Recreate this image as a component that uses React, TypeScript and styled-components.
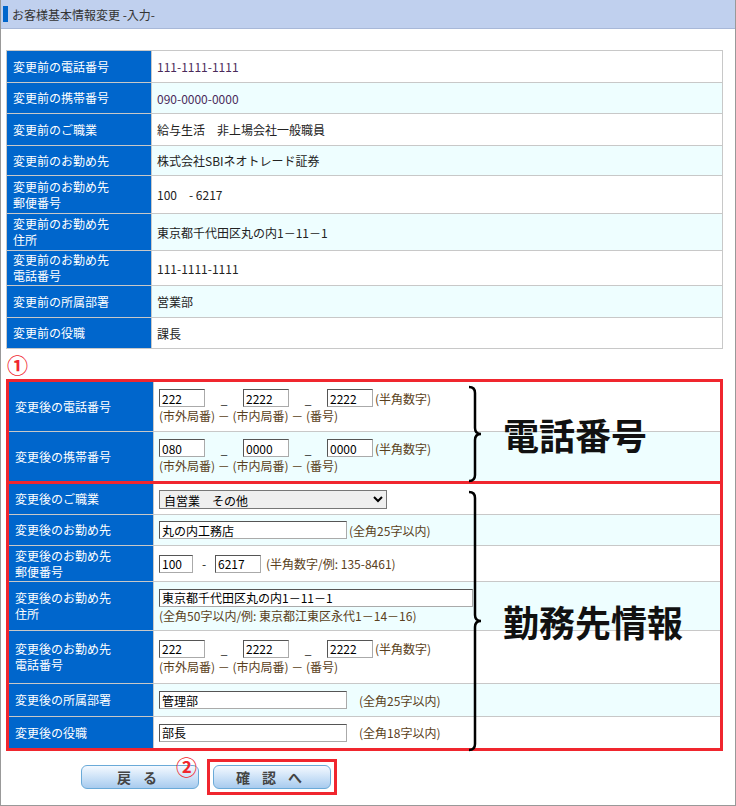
import styled, { createGlobalStyle } from 'styled-components';

const Global = createGlobalStyle`
	body {
		margin: 0;
		font-family: "Noto Sans CJK JP", "Noto Sans", sans-serif;
		font-size: 12px;
		color: #222;
	}
`;

const Frame = styled.div`
	width: 736px;
	height: 806px;
	box-sizing: border-box;
	border: 1px solid #999;
	border-top: none;
	position: relative;
	background: #fff;
`;

const Header = styled.div`
	height: 28px;
	background: #c0d0ee;
	border-bottom: 1px solid #a8b8d8;
	display: flex;
	align-items: center;
	gap: 4px;
	font-size: 12px;
	color: #333;
	&::before {
		content: '';
		width: 5px;
		height: 16px;
		background: #0066cc;
		margin-left: 2px;
	}
`;

const Body = styled.div`
	padding: 21px 12px 0 5px;
`;

const Table = styled.div<{ $boxed?: boolean }>`
	display: grid;
	grid-template-columns: 144px 1fr;
	gap: 1px;
	background: #c8c8c8;
	border: solid #c8c8c8;
	border-width: ${p => (p.$boxed ? '0' : '1px')};
`;

const Label = styled.div<{ $h: number }>`
	background: #0066cc;
	color: #fff;
	min-height: ${p => p.$h}px;
	display: flex;
	align-items: center;
	padding: 0 6px;
	line-height: 16px;
	font-size: 12px;
`;

const Value = styled.div<{ $alt?: boolean }>`
	background: ${p => (p.$alt ? '#eefeff' : '#fff')};
	padding: 0 5px;
	display: flex;
	flex-direction: column;
	justify-content: center;
	font-size: 12px;
`;

const RedBox = styled.div`
	border: 3px solid #f0262e;
	background: #c8c8c8;
`;

const Marker = styled.div`
	color: #f0262e;
	font-size: 21px;
	font-weight: bold;
	height: 30px;
	display: flex;
	align-items: center;
	padding-left: 1px;
`;

const Line = styled.div`
	display: flex;
	align-items: center;
	white-space: nowrap;
`;

const Input = styled.input<{ $w: number }>`
	width: ${p => p.$w}px;
	height: 18px;
	box-sizing: border-box;
	font: inherit;
	font-size: 12px;
	padding: 0 2px;
	border: 1px solid #aaa;
	border-top-color: #555;
	border-left-color: #555;
	background: #fff;
	color: #000;
`;

const Select = styled.select`
	width: 228px;
	height: 19px;
	font: inherit;
	font-size: 12px;
	border: 1px solid #777;
	padding: 0;
`;

const Hint = styled.span<{ $ml?: number }>`
	color: #5a4020;
	font-size: 12px;
	margin-left: ${p => p.$ml ?? 2}px;
`;

const Dash = styled.span<{ $w: number }>`
	width: ${p => p.$w}px;
	text-align: center;
	display: inline-block;
`;

const Side = styled.div<{ $top: number; $h: number }>`
	position: absolute;
	left: 466px;
	top: ${p => p.$top}px;
	height: ${p => p.$h}px;
	display: flex;
	align-items: center;
	gap: 20px;
	font-size: 36px;
	font-weight: bold;
	color: #111;
`;

const Buttons = styled.div`
	display: flex;
	gap: 14px;
	padding: 14px 0 0 75px;
	position: relative;
`;

const Btn = styled.button`
	width: 118px;
	height: 24px;
	border: 1px solid #6aaad8;
	border-radius: 6px;
	background: linear-gradient(#f4f9ff, #c6def6 60%, #a8cbee);
	font: inherit;
	font-weight: bold;
	font-size: 14px;
	color: #444;
	letter-spacing: 12px;
	padding-left: 12px;
`;

const BtnBox = styled.div`
	border: 3px solid #f0262e;
	padding: 3px;
	margin-top: -6px;
	margin-left: -6px;
`;

const Circle2 = styled.span`
	position: absolute;
	left: 170px;
	top: 0;
	color: #f0262e;
	font-size: 21px;
	font-weight: bold;
`;

const Brace = ({ h }: { h: number }) => (
	<svg width="16" height={h} viewBox={`0 0 16 ${h}`}>
		<path
			d={`M2 2 Q8 2 8 8 L8 ${h / 2 - 6} Q8 ${h / 2} 14 ${h / 2} Q8 ${h / 2} 8 ${h / 2 + 6} L8 ${h - 8} Q8 ${h - 2} 2 ${h - 2}`}
			fill="none"
			stroke="#000"
			strokeWidth="2.5"
		/>
	</svg>
);

const before = [
	['変更前の電話番号', '111-1111-1111', 31],
	['変更前の携帯番号', '090-0000-0000', 30],
	['変更前のご職業', '給与生活　非上場会社一般職員', 31],
	['変更前のお勤め先', '株式会社SBIネオトレード証券', 29],
	['変更前のお勤め先\n郵便番号', '100　-  6217', 37],
	['変更前のお勤め先\n住所', '東京都千代田区丸の内1－11－1', 36],
	['変更前のお勤め先\n電話番号', '111-1111-1111', 34],
	['変更前の所属部署', '営業部', 31],
	['変更前の役職', '課長', 30],
] as const;

const ml = (s: string) => s.split('\n').map((t, i) => <div key={i}>{t}</div>);

const Phone = ({ v }: { v: [string, string, string] }) => (
	<>
		<Line>
			<Input $w={46} defaultValue={v[0]} />
			<Dash $w={38}>_</Dash>
			<Input $w={46} defaultValue={v[1]} />
			<Dash $w={38}>_</Dash>
			<Input $w={46} defaultValue={v[2]} />
			<Hint>(半角数字)</Hint>
		</Line>
		<Line>
			<Hint $ml={0}>(市外局番) － (市内局番) － (番号)</Hint>
		</Line>
	</>
);

export default function App() {
	return (
		<Frame>
			<Global />
			<Header>お客様基本情報変更 -入力-</Header>
			<Body>
				<Table>
					{before.map(([l, v, h], i) => (
						<>
							<Label key={'l' + i} $h={h}>
								<div>{ml(l)}</div>
							</Label>
							<Value key={'v' + i} $alt={i % 2 === 1}>
								<span style={{ color: i < 2 ? '#4a2a5a' : '#222' }}>{v}</span>
							</Value>
						</>
					))}
				</Table>
				<Marker>①</Marker>
				<RedBox>
					<Table $boxed>
						<Label $h={49}>変更後の電話番号</Label>
						<Value><Phone v={['222', '2222', '2222']} /></Value>
						<Label $h={49}>変更後の携帯番号</Label>
						<Value $alt><Phone v={['080', '0000', '0000']} /></Value>
					</Table>
				</RedBox>
				<RedBox style={{ borderTop: 'none' }}>
					<Table $boxed>
						<Label $h={30}>変更後のご職業</Label>
						<Value>
							<Line>
								<Select defaultValue="a">
									<option value="a">自営業　その他</option>
								</Select>
							</Line>
						</Value>
						<Label $h={30}>変更後のお勤め先</Label>
						<Value $alt>
							<Line>
								<Input $w={188} defaultValue="丸の内工務店" />
								<Hint>(全角25字以内)</Hint>
							</Line>
						</Value>
						<Label $h={35}><div>{ml('変更後のお勤め先\n郵便番号')}</div></Label>
						<Value>
							<Line>
								<Input $w={34} defaultValue="100" />
								<Dash $w={22}>-</Dash>
								<Input $w={46} defaultValue="6217" />
								<Hint $ml={5}>(半角数字/例: 135-8461)</Hint>
							</Line>
						</Value>
						<Label $h={48}><div>{ml('変更後のお勤め先\n住所')}</div></Label>
						<Value $alt>
							<Line>
								<Input $w={314} defaultValue="東京都千代田区丸の内1－11－1" />
							</Line>
							<Line>
								<Hint $ml={0}>(全角50字以内/例: 東京都江東区永代1－14－16)</Hint>
							</Line>
						</Value>
						<Label $h={52}><div>{ml('変更後のお勤め先\n電話番号')}</div></Label>
						<Value><Phone v={['222', '2222', '2222']} /></Value>
						<Label $h={32}>変更後の所属部署</Label>
						<Value $alt>
							<Line>
								<Input $w={188} defaultValue="管理部" />
								<Hint $ml={12}>(全角25字以内)</Hint>
							</Line>
						</Value>
						<Label $h={31}>変更後の役職</Label>
						<Value>
							<Line>
								<Input $w={188} defaultValue="部長" />
								<Hint $ml={12}>(全角18字以内)</Hint>
							</Line>
						</Value>
					</Table>
				</RedBox>
				<Buttons>
					<Btn>戻る</Btn>
					<Circle2>②</Circle2>
					<BtnBox>
						<Btn>確認へ</Btn>
					</BtnBox>
				</Buttons>
			</Body>
			<Side $top={385} $h={98}>
				<Brace h={98} />
				<span>電話番号</span>
			</Side>
			<Side $top={490} $h={262}>
				<Brace h={262} />
				<span>勤務先情報</span>
			</Side>
		</Frame>
	);
}
